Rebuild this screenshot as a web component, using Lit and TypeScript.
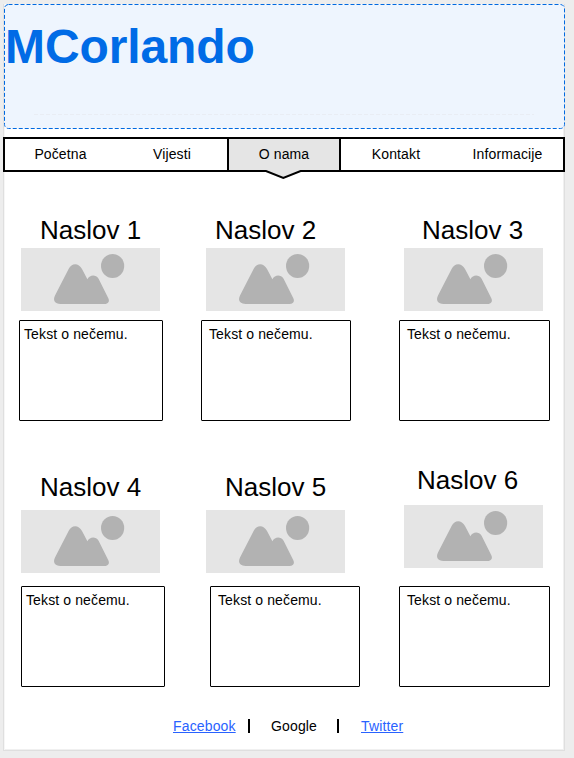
import { LitElement, html, css } from "lit";
import { customElement } from "lit/decorators.js";

@customElement("picture-placeholder")
class PicturePlaceholder extends LitElement {
  static styles = css`
    :host { display: block; width: 139px; height: 63px; }
    .art { display: block; }
    .back { fill: #e5e5e5; }
    .shape { fill: #b2b2b2; }
  `;
  render() {
    return html`<svg class="art" width="139" height="63" viewBox="0 0 139 63">
      <rect class="back" width="139" height="63" />
      <ellipse class="shape" cx="91.6" cy="18" rx="11.6" ry="12" />
      <path class="shape" d="M34 47.5 L47.6 21 C50.6 14.6 57.6 14.6 61 21 L66.4 31.3 C69 26.4 74.8 26.3 77.6 30.8 L87.2 50 C89 53.4 87.2 56 83.4 56 H39.6 C33.8 56 31.6 52.4 34 47.5 Z" />
    </svg>`;
  }
}

@customElement("topic-card")
class TopicCard extends LitElement {
  static properties = { heading: {}, text: {} };
  declare heading: string;
  declare text: string;
  static styles = css`
    :host { display: block; }
    .heading { margin: 0 0 var(--image-gap, 3px) var(--heading-x); font-size: 26px; line-height: 30px; font-weight: 400; white-space: nowrap; }
    .picture { margin-left: var(--image-x); }
    .note { box-sizing: border-box; width: var(--note-width, 150px); height: 101px; margin-top: var(--note-gap, 9px); margin-left: var(--note-x, 0px); padding: 5px 0 0 var(--note-pad, 7px); border: 1px solid #000; border-radius: 1px; font-size: 14px; line-height: 16px; letter-spacing: 0.12px; }
  `;
  render() {
    return html`
      <h2 class="heading">${this.heading}</h2>
      <picture-placeholder class="picture"></picture-placeholder>
      <div class="note">${this.text}</div>
    `;
  }
}

@customElement("app-root")
class AppRoot extends LitElement {
  static styles = css`
    :host { display: block; box-sizing: border-box; width: 574px; height: 758px; padding: 4px 0 0 3px; background: #ededed; color: #000; font-family: "Liberation Sans", Arial, sans-serif; overflow: hidden; }
    .page { box-sizing: border-box; width: 562px; height: 747px; border: 1px solid #dfdfdf; border-top: 0; box-shadow: inset 1px 0 #f6f6f6, inset -1px -1px #f0f0f0; background: #fff; }
    .banner { position: relative; width: 561px; height: 125px; }
    .outline { position: absolute; inset: 0; }
    .frame { fill: #eef5fe; stroke: #0069e0; stroke-dasharray: 4 2; }
    .rule { stroke: #e9edf4; stroke-dasharray: 4 2; }
    .brand { position: relative; margin: 0; padding: 16px 0 0 1px; font-size: 48px; line-height: 54px; font-weight: 700; letter-spacing: -0.1px; color: #006be6; }
    .nav { box-sizing: border-box; width: 562px; height: 35px; margin: 8px 0 0 -1px; border: 2px solid #000; display: grid; grid-template-columns: 111px 112px 112px 112px 111px; background: #fff; font-size: 14px; line-height: 31px; letter-spacing: 0.12px; text-align: center; position: relative; }
    .active { position: relative; margin: 0 -1px; border: solid #000; border-width: 0 2px; background: #e5e5e5; }
    .pointer { position: absolute; left: 35px; top: 30px; }
    .pointer-fill { fill: #e5e5e5; }
    .pointer-line { fill: none; stroke: #000; stroke-width: 2; }
    .row { display: grid; grid-template-columns: 182px 198px 151px; padding-left: 15px; }
    .first { margin-top: 43px; height: 206px; }
    .second { margin-top: 51px; height: 215px; }
    .c1 { --heading-x: 21px; --image-x: 2px; --note-width: 144px; --note-pad: 4px; }
    .c2 { --heading-x: 14px; --image-x: 5px; }
    .c3 { --heading-x: 23px; --image-x: 5px; --note-width: 151px; }
    .c4 { --heading-x: 21px; --image-x: 2px; --image-gap: 8px; --note-width: 144px; --note-pad: 4px; --note-x: 2px; --note-gap: 13px; }
    .c5 { --heading-x: 24px; --image-x: 5px; --image-gap: 8px; --note-x: 9px; --note-gap: 13px; }
    .c6 { --heading-x: 18px; --image-x: 5px; --image-gap: 10px; --note-width: 151px; --note-gap: 18px; margin-top: -7px; }
    .links { display: flex; align-items: center; margin-top: 30px; padding-left: 169px; font-size: 14px; line-height: 16px; height: 18px; }
    .link { color: #2962ff; text-decoration: underline; width: 75px; letter-spacing: 0.15px; }
    .bar { width: 2px; height: 14px; background: #000; }
    .plain { width: 66px; padding-left: 21px; letter-spacing: 0.15px; }
    .last { padding-left: 22px; width: auto; }
  `;

  private tabs = ["Početna", "Vijesti", "O nama", "Kontakt", "Informacije"];

  private card(n: number) {
    return html`<topic-card class="c${n}" .heading=${`Naslov ${n}`} .text=${"Tekst o nečemu."}></topic-card>`;
  }

  render() {
    return html`
      <main class="page">
        <header class="banner">
          <svg class="outline" width="561" height="125" viewBox="0 0 561 125">
            <rect class="frame" x="0.5" y="0.5" width="560" height="124" rx="4" />
            <path class="rule" d="M30 110.5H530" />
          </svg>
          <h1 class="brand">MCorlando</h1>
        </header>
        <nav class="nav">
          ${this.tabs.map((tab, i) => i === 2
            ? html`<div class="active">${tab}
                <svg class="pointer" width="40" height="11" viewBox="0 0 40 11">
                  <path class="pointer-fill" d="M1 0H38V2L19.5 10L1 2Z" />
                  <path class="pointer-line" d="M0 2H2L19.3 9L36.6 2H40" />
                </svg></div>`
            : html`<div>${tab}</div>`)}
        </nav>
        <section class="row first">${[1, 2, 3].map((n) => this.card(n))}</section>
        <section class="row second">${[4, 5, 6].map((n) => this.card(n))}</section>
        <footer class="links">
          <a class="link">Facebook</a>
          <span class="bar"></span>
          <span class="plain">Google</span>
          <span class="bar"></span>
          <a class="link last">Twitter</a>
        </footer>
      </main>
    `;
  }
}
